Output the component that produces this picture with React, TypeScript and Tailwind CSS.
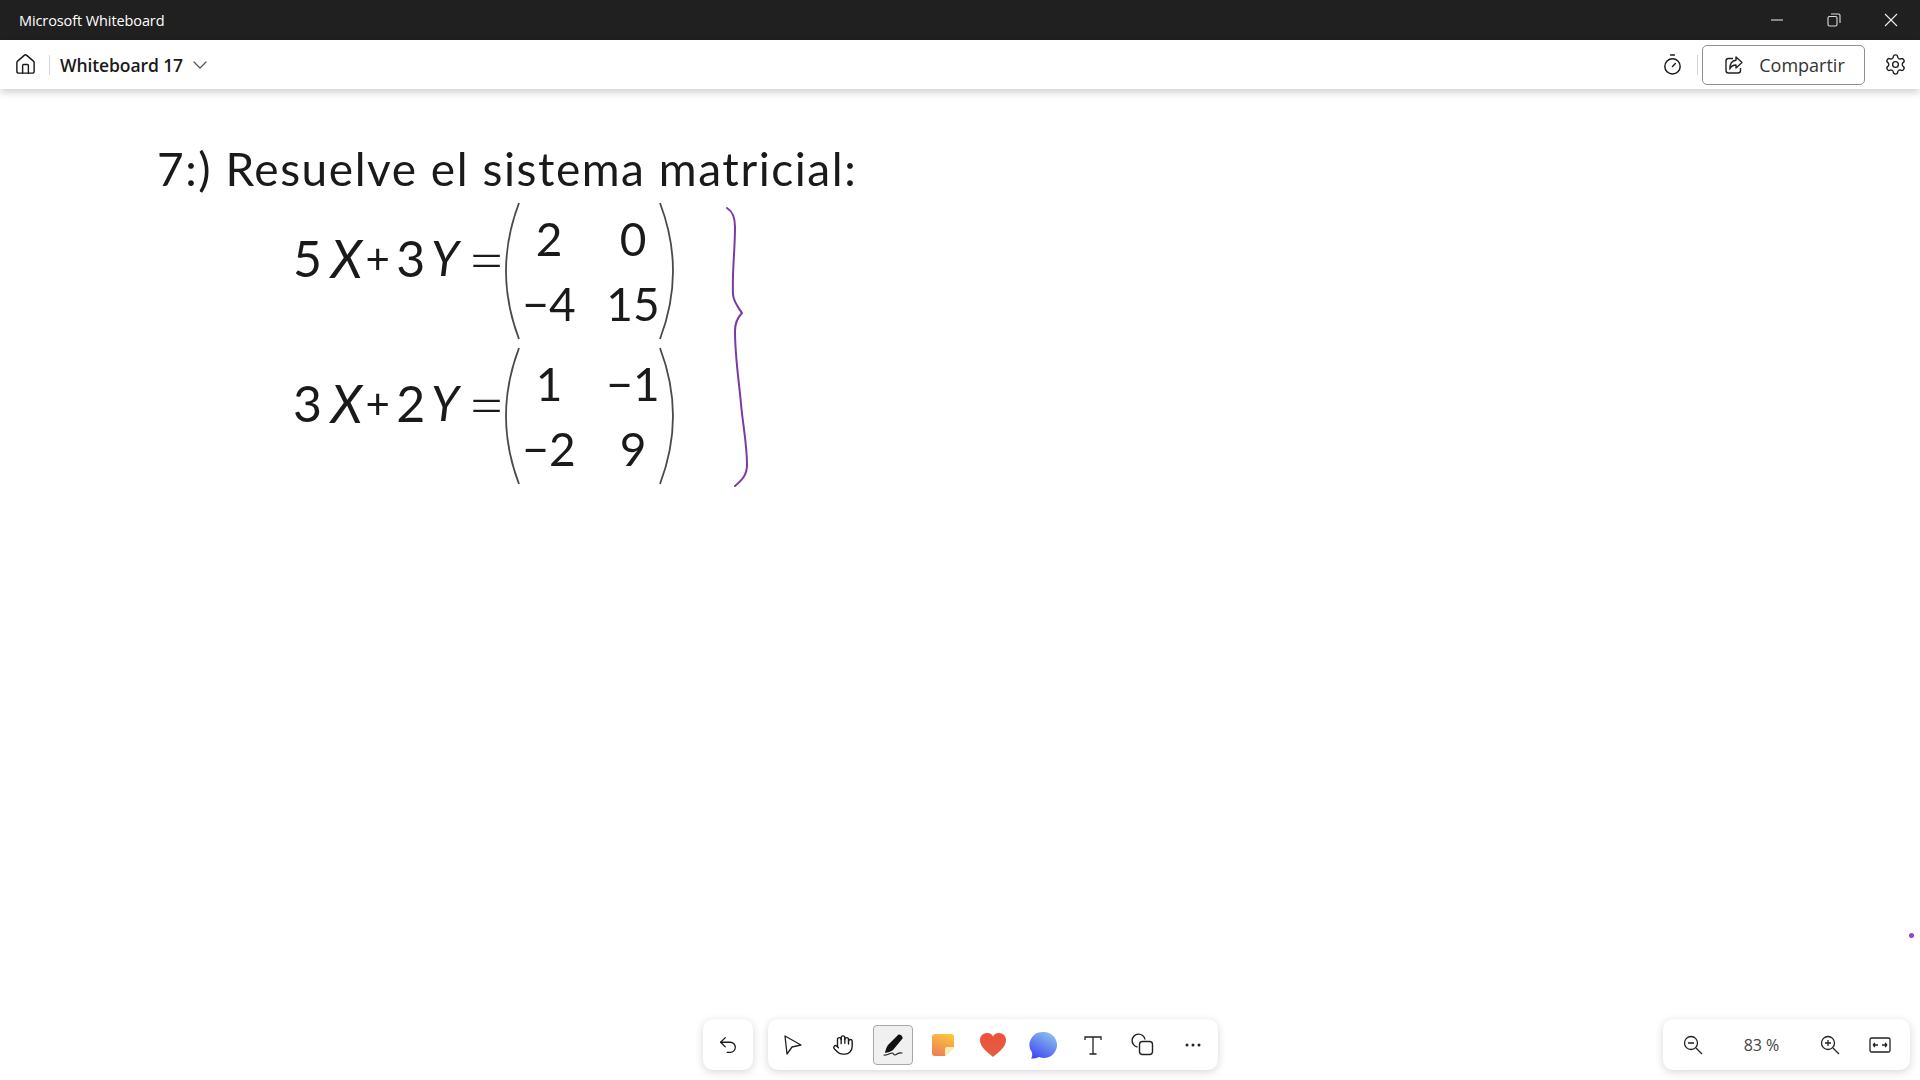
import React from 'react';
import { ChevronDown, Hand, House, Settings, Timer, Undo2 } from 'lucide-react';

const Paren: React.FC<{ flip?: boolean }> = ({ flip }) => (
  <svg width="16" height="138" viewBox="0 0 16 138" className={flip ? '-scale-x-100' : ''}>
    <path d="M14 1C3 30 1 52 1 69s2 39 13 68" fill="none" stroke="#4a4a4a" strokeWidth="1.8" />
  </svg>
);

const Equation: React.FC<{ lhs: string[]; cells: string[]; className: string }> = ({ lhs, cells, className }) => (
  <div className={`absolute flex items-center text-[#1a1a1a] font-['Lato',sans-serif] blur-[0.3px] ${className}`}>
    <div className="flex items-center w-[212px] mb-[26px] text-[50px] leading-none">
      <span className="w-[38px]">{lhs[0]}</span>
      <span className="w-[35px] italic text-[52px]">X</span>
      <span className="w-[31px] text-[42px]">+</span>
      <span className="w-[35px]">{lhs[1]}</span>
      <span className="w-[37px] italic text-[48px]">Y</span>
      <span className="text-[64px] font-light">=</span>
    </div>
    <Paren />
    <div className="grid grid-cols-[56px_56px] gap-x-[28px] grid-rows-[65px_65px] w-[137px] items-center justify-items-center text-[46px] leading-none">
      {cells.map((c, i) => <span key={i}>{c}</span>)}
    </div>
    <Paren flip />
  </div>
);

const ToolBtn: React.FC<{ active?: boolean; children: React.ReactNode }> = ({ active, children }) => (
  <div className={`w-[40px] h-[40px] flex items-center justify-center rounded-[4px] ${active ? 'bg-[#f0f0f0] border border-[#a8a8a8]' : ''}`}>
    {children}
  </div>
);

const card = 'bg-white rounded-[10px] h-[51px] flex items-center shadow-[0_2px_8px_rgba(0,0,0,0.16)]';

export default function App() {
  return (
    <div className="w-[1920px] h-[1080px] flex flex-col bg-white overflow-hidden font-['Open_Sans',sans-serif] text-[#1a1a1a]">
      {/* Title bar */}
      <div className="h-[40px] shrink-0 bg-[#202020] flex items-center justify-between text-white">
        <span className="pl-[19px] pt-px text-[14.5px] tracking-[-0.1px]">Microsoft Whiteboard</span>
        <div className="flex items-center">
          <div className="w-[57px] flex justify-center">
            <svg width="14" height="14" viewBox="0 0 14 14"><path d="M1 7h12" stroke="#ccc" strokeWidth="1.2" /></svg>
          </div>
          <div className="w-[57px] flex justify-center">
            <svg width="14" height="14" viewBox="0 0 14 14" fill="none" stroke="#ddd" strokeWidth="1.1">
              <rect x="1" y="3.500" width="9" height="9.500" rx="1.500" />
              <path d="M4 1h7.500A1.500 1.500 0 0 1 13 2.500V10" />
            </svg>
          </div>
          <div className="w-[58px] flex justify-center">
            <svg width="14" height="14" viewBox="0 0 14 14"><path d="M1 1l12 12M13 1L1 13" stroke="#eee" strokeWidth="1.1" /></svg>
          </div>
        </div>
      </div>

      {/* Header */}
      <div className="h-[49px] shrink-0 bg-white flex items-center z-10 shadow-[0_3px_8px_rgba(0,0,0,0.2)]">
        <House size={23} strokeWidth={1.5} className="ml-[14px]" />
        <div className="w-px h-[20px] bg-[#d4d4d4] ml-[12px]" />
        <span className="ml-[10px] pt-[2px] text-[17.5px] font-semibold tracking-[-0.1px]">Whiteboard 17</span>
        <ChevronDown size={24} strokeWidth={1.2} className="ml-[5px] mt-px text-[#555]" />
        <div className="ml-auto flex items-center">
          <Timer size={23} strokeWidth={1.5} />
          <div className="w-px h-[20px] bg-[#d4d4d4] ml-[13px] mr-[4px]" />
          <div className="w-[163px] h-[40px] pl-[2px] border border-[#8f8f8f] rounded-[5px] flex items-center justify-center gap-[15px] text-[18px] text-[#333]">
            <svg width="20" height="20" viewBox="0 0 20 20" fill="none" stroke="#222" strokeWidth="1.4" strokeLinejoin="round">
              <path d="M9 3.500H4.500A2.500 2.500 0 0 0 2 6v9.500A2.500 2.500 0 0 0 4.500 18H14a2.500 2.500 0 0 0 2.500-2.500V13" />
              <path d="M12 2l6 5.500-6 5.500V10C9 10 7 11 5.800 14 5.800 9 8 5.500 12 5.200z" />
            </svg>
            <span className="pt-[2px]">Compartir</span>
          </div>
          <Settings size={23} strokeWidth={1.4} className="ml-[19px] mr-[13px]" />
        </div>
      </div>

      {/* Canvas */}
      <div className="relative flex-1">
        <div className="absolute left-[157px] top-[53px] text-[46px] leading-[54px] text-[#1a1a1a] font-['Lato',sans-serif] tracking-[1.55px] whitespace-nowrap blur-[0.3px]">
          7:) Resuelve el sistema matricial:
        </div>
        <Equation lhs={['5', '3']} cells={['2', '0', '−4', '15']} className="left-[293px] top-[113px]" />
        <Equation lhs={['3', '2']} cells={['1', '−1', '−2', '9']} className="left-[293px] top-[258px]" />
        <svg className="absolute left-[720px] top-[112px]" width="34" height="290" viewBox="0 0 34 290" fill="none">
          <path d="M7 7c5 3 8 9 8 19 0 24-3 44-2 67 0 7 5 13 9 19-4 4-7 10-7 18 0 26 4 50 6 73 2 22 6 40 6 61 0 10-5 15-12 21" stroke="#7b3aa3" strokeWidth="2" strokeLinecap="round" />
        </svg>
        <div className="absolute left-[1909px] top-[844px] w-[5px] h-[5px] rounded-full bg-[#9a3fc0]" />

        {/* Bottom toolbars */}
        <div className="absolute left-[703px] right-[10px] top-[930px] flex items-center">
          <div className={`${card} w-[50px] justify-center`}>
            <Undo2 size={22} strokeWidth={1.4} />
          </div>
          <div className={`${card} ml-[15px] w-[450px] pl-[5px] gap-[10px]`}>
            <ToolBtn>
              <svg width="22" height="22" viewBox="0 0 22 22" fill="none" stroke="#222" strokeWidth="1.3" strokeLinejoin="round">
                <path d="M3 2l16 9-9 2-5 7z" />
              </svg>
            </ToolBtn>
            <ToolBtn><Hand size={22} strokeWidth={1.5} /></ToolBtn>
            <ToolBtn active>
              <svg width="24" height="24" viewBox="0 0 24 24" fill="none">
                <path d="M17.500 1.500c2-.5 4.500 2 4 4L12 17c-2 1.500-5 2.500-8 3 .5-3 1.500-6 3-8z" fill="#111" />
                <path d="M3 22c4 .5 6-2 8-2s1 2 3 2 3-3 7-2" stroke="#222" strokeWidth="1.2" strokeLinecap="round" />
              </svg>
            </ToolBtn>
            <ToolBtn>
              <svg width="24" height="24" viewBox="0 0 24 24">
                <defs>
                  <linearGradient id="note" x1="0.6" y1="0" x2="0.2" y2="1">
                    <stop offset="0" stopColor="#fcc13e" />
                    <stop offset="1" stopColor="#ea7f55" />
                  </linearGradient>
                </defs>
                <path d="M4 1h16a3 3 0 0 1 3 3v10l-9 9H4a3 3 0 0 1-3-3V4a3 3 0 0 1 3-3z" fill="url(#note)" />
                <path d="M23 14h-7a2 2 0 0 0-2 2v7z" fill="#fdeeb4" />
              </svg>
            </ToolBtn>
            <ToolBtn>
              <svg width="28" height="26" viewBox="0 0 28 26">
                <defs>
                  <linearGradient id="heart" x1="0.5" y1="0" x2="0.5" y2="1">
                    <stop offset="0" stopColor="#f0503a" />
                    <stop offset="1" stopColor="#e0603f" />
                  </linearGradient>
                </defs>
                <path d="M14 25C8 20 1 15 1 8c0-4 3-7 7-7 3 0 5 1.500 6 3.500C15 2.500 17 1 20 1c4 0 7 3 7 7 0 7-7 12-13 17z" fill="url(#heart)" />
              </svg>
            </ToolBtn>
            <ToolBtn>
              <svg width="28" height="28" viewBox="0 0 28 28">
                <defs>
                  <linearGradient id="bubble" x1="0.8" y1="0" x2="0.2" y2="1">
                    <stop offset="0" stopColor="#8cc4ee" />
                    <stop offset="1" stopColor="#4048f2" />
                  </linearGradient>
                </defs>
                <path d="M15 1a13 13 0 1 1-5 25c-2 1-5 1.500-8 1.500 1-1.500 1.500-3.500 1-6A13 13 0 0 1 15 1z" fill="url(#bubble)" />
              </svg>
            </ToolBtn>
            <ToolBtn>
              <svg width="20" height="22" viewBox="0 0 20 22" fill="none" stroke="#222" strokeWidth="1.3">
                <path d="M2 6V3h16v3M10 3v17M6.500 20h7" />
              </svg>
            </ToolBtn>
            <ToolBtn>
              <svg width="24" height="24" viewBox="0 0 24 24" fill="none" stroke="#222" strokeWidth="1.4">
                <path d="M14 6.500A6.500 6.500 0 1 0 6.500 14" />
                <rect x="8.500" y="8.500" width="13" height="13" rx="3" />
              </svg>
            </ToolBtn>
            <ToolBtn>
              <svg width="18" height="4" viewBox="0 0 18 4" fill="#222">
                <circle cx="3" cy="2" r="1.500" /><circle cx="9" cy="2" r="1.500" /><circle cx="15" cy="2" r="1.500" />
              </svg>
            </ToolBtn>
          </div>
          <div className={`${card} ml-auto w-[247px] pl-[10px]`}>
            <div className="w-[40px] flex justify-center">
              <svg width="20" height="20" viewBox="0 0 20 20" fill="none" stroke="#222" strokeWidth="1.3">
                <circle cx="8" cy="8" r="6.500" /><path d="M13 13l6 6M5 8h6" />
              </svg>
            </div>
            <span className="w-[97px] pt-px text-center text-[16px] text-[#444]">83 %</span>
            <div className="w-[40px] flex justify-center">
              <svg width="20" height="20" viewBox="0 0 20 20" fill="none" stroke="#222" strokeWidth="1.3">
                <circle cx="8" cy="8" r="6.500" /><path d="M13 13l6 6M5 8h6M8 5v6" />
              </svg>
            </div>
            <div className="w-[60px] flex justify-center">
              <svg width="22" height="16" viewBox="0 0 22 16" fill="none" stroke="#222" strokeWidth="1.300">
                <rect x="1" y="1" width="20" height="14" rx="1.500" />
                <path d="M4 8h5M4 8l2-2M4 8l2 2M18 8h-5M18 8l-2-2M18 8l-2 2" />
              </svg>
            </div>
          </div>
        </div>
      </div>
    </div>
  );
}
